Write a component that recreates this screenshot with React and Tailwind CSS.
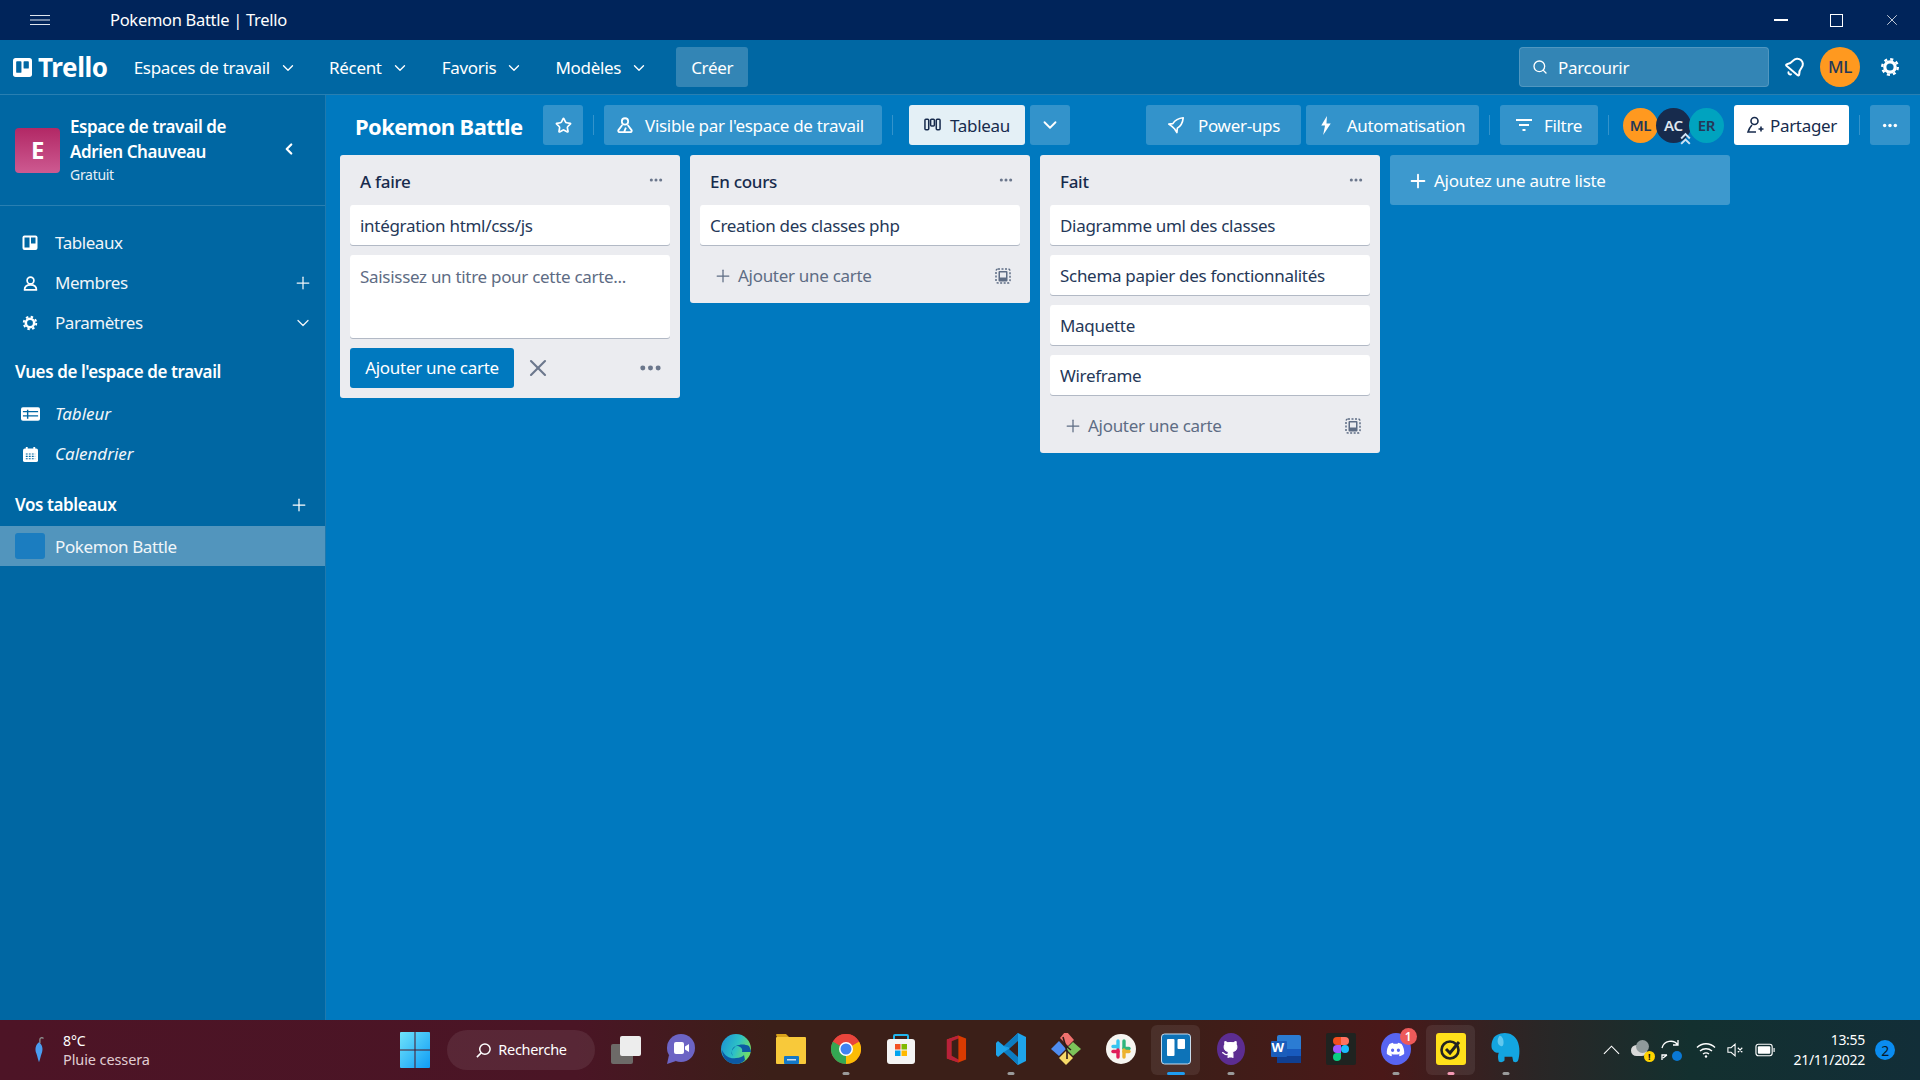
import React from "react";
import { Bell, ChevronDown, ChevronLeft, Plus, Search, Star, X } from "lucide-react";
import { FaDiscord } from "react-icons/fa";

const Dots = ({ className = "" }) => (
  <svg viewBox="0 0 24 6" className={className} fill="currentColor"><circle cx="4" cy="3" r="2.6" /><circle cx="12" cy="3" r="2.6" /><circle cx="20" cy="3" r="2.6" /></svg>
);
const Rocket = ({ className = "" }) => (
  <svg viewBox="0 0 20 20" className={className} fill="none" stroke="currentColor" strokeWidth="1.8" strokeLinejoin="round"><path d="M18 2C13 2.500 9 4.500 6.500 8.500L2 9l3.500 2.500 3 3L11 18.500l.5-5C15.500 11 17.500 7 18 2z" /></svg>
);
const Gear = ({ className = "" }) => (
  <svg viewBox="0 0 20 20" className={className} fill="none" stroke="currentColor"><circle cx="10" cy="10" r="5.200" strokeWidth="3.200" /><circle cx="10" cy="10" r="7.800" strokeWidth="2.400" strokeDasharray="3.060 3.060" /></svg>
);
const Person = ({ className = "" }) => (
  <svg viewBox="0 0 20 20" className={className} fill="none" stroke="currentColor" strokeWidth="2"><circle cx="10" cy="6.5" r="4" /><path d="M3 17.5c0-4 3-6 7-6s7 2 7 6z" strokeLinejoin="round" /></svg>
);
const BoardIcon = ({ className = "" }) => (
  <svg viewBox="0 0 16 16" className={className}><rect x="0.5" y="0.5" width="15" height="14.5" rx="2" fill="#fff" /><rect x="2.500" y="2.500" width="5" height="10" fill="#0067a3" /><rect x="9" y="2.500" width="4.500" height="6" fill="#0067a3" /></svg>
);
const TemplateIcon = () => (
  <svg viewBox="0 0 16 16" className="w-[16px] h-[16px] text-[#5e6c84]"><rect x="1" y="1" width="14" height="14" rx="2" fill="none" stroke="currentColor" strokeWidth="1.5" strokeDasharray="2 1.5" /><rect x="3.5" y="3" width="9" height="10.5" rx="1" fill="currentColor" /><rect x="5" y="4.5" width="6" height="5" fill="#ebecf0" /></svg>
);

const NavItem = ({ label, className = "" }) => (
  <div className={`flex items-center ${className}`}>
    <span>{label}</span>
    <ChevronDown className="w-[18px] h-[18px] ml-[9px]" strokeWidth={1.8} />
  </div>
);

const HBtn = ({ w, children, className = "" }) => (
  <div style={{ width: w }} className={`h-[40px] rounded-[3px] bg-[#ffffff33] flex items-center justify-center shrink-0 text-white text-[17px] ${className}`}>{children}</div>
);
const Sep = ({ className = "mx-[10px]" }) => <div className={`w-px h-[20px] bg-[#ffffff33] shrink-0 ${className}`} />;

const SideRow = ({ icon, label, right, italic }) => (
  <div className={`h-[40px] flex items-center pl-[20px] pr-[12px] text-[17px] text-[#f0f5f9] ${italic ? "italic tracking-[0px]" : "tracking-[-0.45px]"}`}>
    <span className="w-[20px] h-[20px] flex items-center justify-center text-white">{icon}</span>
    <span className="ml-[15px] flex-1">{label}</span>
    {right}
  </div>
);

const Card = ({ children }) => (
  <div className="h-[40px] rounded-[3px] bg-white shadow-[0_1px_0_#091e4240] px-[10px] pt-[2px] flex items-center text-[17px] text-[#253858] mb-[10px]">{children}</div>
);
const ListHead = ({ title }) => (
  <div className="h-[50px] pl-[20px] pr-[17px] flex items-center justify-between text-[17px] font-medium text-[#172b4d] pt-[4px]">
    <span>{title}</span>
    <Dots className="w-[14px] h-[4px] text-[#6b778c] -mt-[5px]" />
  </div>
);
const AddRow = () => (
  <div className="h-[40px] mx-[10px] mb-[8px] flex items-center text-[17px] text-[#5e6c84] pl-[13px] pr-[9px] pt-[2px]">
    <Plus className="w-[20px] h-[20px] mr-[5px]" strokeWidth={1.5} />
    <span className="flex-1">Ajouter une carte</span>
    <TemplateIcon />
  </div>
);
const Avatar = ({ bg, text, label, className = "", children }) => (
  <div className={`w-[35px] h-[35px] rounded-full relative flex items-center justify-center text-[15px] font-semibold shrink-0 ${bg} ${text} ${className}`}>{label}{children}</div>
);

/* taskbar icons */
const I = ({ children, active, dot, w = 55 }) => (
  <div style={{ width: w }} className="h-[50px] relative flex items-center justify-center shrink-0">
    {active && <div className="absolute inset-x-[3px] inset-y-0 rounded-[6px] bg-[#ffffff14]" />}
    <div className="relative w-[30px] h-[30px] flex items-center justify-center -mt-[2px]">{children}</div>
    {dot && <div className={`absolute bottom-[0px] left-1/2 -translate-x-1/2 h-[3px] rounded-full ${dot}`} />}
  </div>
);

const Taskbar = () => (
  <div className="h-[60px] shrink-0 flex items-center bg-[linear-gradient(90deg,#4d1426_0%,#4a1525_30%,#3b1f18_40%,#3b1f18_60%,#4a1818_72%,#2a2626_80%,#13302f_88%,#122e38_100%)] text-white">
    <div className="w-[400px] shrink-0 flex items-center pl-[32px]">
      <svg viewBox="0 0 16 32" className="w-[14px] h-[30px]"><path d="M9 8V4c0-2 3-3 4-1" stroke="#888" strokeWidth="1.6" fill="none" /><path d="M8 7c4 3 5 8 3 13-1 3-2 7-3 10-1-3-2-7-3-10C3 15 4 10 8 7z" fill="#4a9df0" /></svg>
      <div className="ml-[17px] leading-[18px] tracking-[-0.1px]">
        <div className="text-[14px]">8°C</div>
        <div className="text-[14.5px] text-[#e0cdd2]">Pluie cessera</div>
      </div>
    </div>
    <svg viewBox="0 0 30 36" className="w-[30px] h-[36px] shrink-0">
      <defs><linearGradient id="win" x1="0" y1="0" x2="1" y2="1"><stop offset="0" stopColor="#6fe3fb" /><stop offset="1" stopColor="#0f9cf5" /></linearGradient></defs>
      <path d="M1 0h13.5v17.5H0V1a1 1 0 0 1 1-1zM15.5 0H29a1 1 0 0 1 1 1v16.5H15.5zM0 18.5h14.5V36H1a1 1 0 0 1-1-1zM15.5 18.5H30V35a1 1 0 0 1-1 1H15.5z" fill="url(#win)" />
    </svg>
    <div className="ml-[17px] w-[148px] h-[40px] rounded-full bg-[#ffffff14] flex items-center justify-center text-[14.5px] shrink-0">
      <svg viewBox="0 0 18 18" className="w-[17px] h-[17px] mr-[6px]" fill="none" stroke="#fff" strokeWidth="1.6"><circle cx="10.5" cy="7.5" r="5.5" /><path d="M6.5 11.5 2 16" /></svg>
      Recherche
    </div>
    <div className="ml-[16px] w-[30px] h-[30px] relative shrink-0">
      <div className="absolute left-0 top-[9px] w-[22px] h-[20px] rounded-[2px] bg-[#6d6a68]" />
      <div className="absolute right-0 top-[1px] w-[21px] h-[20px] rounded-[2px] bg-[#ededed]" />
    </div>
    <div className="flex items-center ml-[12px]">
      <I><svg viewBox="0 0 30 32" className="w-[30px] h-[32px]"><circle cx="15" cy="15" r="14" fill="#6c64c4" /><path d="M3 22 1 31l9-3z" fill="#6c64c4" /><rect x="8" y="9" width="10" height="12" rx="2" fill="#fff" /><path d="M19 13.5 23 11v8l-4-2.5z" fill="#fff" /></svg></I>
      <I><svg viewBox="0 0 30 30" className="w-[30px] h-[30px]"><defs><linearGradient id="edge" x1="0" y1="0" x2="1" y2="0.4"><stop offset="0" stopColor="#1b8fd6" /><stop offset="0.6" stopColor="#2dc1c6" /><stop offset="1" stopColor="#6fdc6a" /></linearGradient></defs><circle cx="15" cy="15" r="15" fill="url(#edge)" /><path d="M15 30C7 30 1 24 1 16c3 7 9 9 14 8 4 0 7-2 8-3l1 5c-2 2-5 4-9 4z" fill="#0c59a4" /><path d="M12 22c-3-5 0-11 5-10 3 1 5 3 4 6h9c0-2-1-4-2-6-4-2-9-2-13 0-4 3-6 7-3 10z" fill="#0c59a4" /></svg></I>
      <I><svg viewBox="0 0 30 32" className="w-[30px] h-[32px]"><path d="M0 2a1 1 0 0 1 1-1h9l3 3H1z" fill="#d9a21b" /><rect x="0" y="4" width="30" height="27" rx="1" fill="#f8c93a" /><rect x="8" y="23" width="15" height="8" rx="1" fill="#1478c8" /><rect x="11" y="26" width="9" height="1.5" fill="#cde" /></svg></I>
      <I dot="w-[7px] bg-[#9a9a9a]"><svg viewBox="0 0 30 30" className="w-[30px] h-[30px]"><circle cx="15" cy="15" r="15" fill="#e8453c" /><path d="M15 15 2 7.5A15 15 0 0 0 15 30z" fill="#34a853" /><path d="M15 15 15 30A15 15 0 0 0 28 7.5z" fill="#fbbc05" /><path d="M15 15 28 7.5A15 15 0 0 0 2 7.5z" fill="#e8453c" /><circle cx="15" cy="15" r="7" fill="#fff" /><circle cx="15" cy="15" r="5.5" fill="#3f83f1" /></svg></I>
      <I><svg viewBox="0 0 30 32" className="w-[30px] h-[32px]"><path d="M8 7V3a1 1 0 0 1 1-1h12a1 1 0 0 1 1 1v4" fill="none" stroke="#22b6ee" strokeWidth="2" /><rect x="1" y="6" width="28" height="25" rx="3" fill="#f4f4f4" /><rect x="9" y="11" width="5.5" height="5.5" fill="#f25022" /><rect x="15.5" y="11" width="5.5" height="5.5" fill="#7fba00" /><rect x="9" y="17.5" width="5.5" height="5.5" fill="#00a4ef" /><rect x="15.5" y="17.5" width="5.5" height="5.5" fill="#ffb900" /></svg></I>
      <I><svg viewBox="0 0 24 30" className="w-[23px] h-[30px]"><path d="M3 5 15 1l8 3v22l-8 3-12-4z" fill="#d83b01" /><path d="M3 5 15 1v3L8 7v15l7 4v3L3 25z" fill="#b7213a" /><path d="M8 7l7-3v22l-7-4z" fill="#3b1f18" /></svg></I>
      <I dot="w-[7px] bg-[#9a9a9a]"><svg viewBox="0 0 30 32" className="w-[30px] h-[32px]"><path d="M22 0 30 4v24l-8 4-14-13-6 5-2-2V10l2-2 6 5z" fill="#1ea4ea" /><path d="M22 0v32L8 19l6-4-6-2z" fill="#0d7cc1" /><path d="m22 8-9 8 9 8z" fill="#3b1f18" /><path d="M2 8 22 24v-0L8 13 2 8z" fill="#0a6cab" /></svg></I>
      <I><svg viewBox="0 0 30 32" className="w-[30px] h-[32px]"><path d="M15 0h-2L8 6l8 8 6-6z" fill="#f0716e" transform="translate(1 -1)" /><path d="M8 8 0 16l8 7 7-7z" fill="#4f8df0" /><path d="M22 9l-7 7 7 7 8-7z" fill="#7cc35a" /><path d="M15 18l-7 7 7 7 7-7z" fill="#f6da68" /><path d="M12 4l4 14v8M15 13l5 4" stroke="#2d1b17" strokeWidth="1.6" fill="none" /></svg></I>
      <I><svg viewBox="0 0 30 30" className="w-[30px] h-[30px]"><circle cx="15" cy="15" r="15" fill="#f7f5f1" /><g strokeWidth="3.4" strokeLinecap="round"><path d="M12 7v7M7 12.5h5" stroke="#36c5f0" /><path d="M18 7v7" stroke="#2eb67d" /><path d="M18 14.5h5" stroke="#2eb67d" /><path d="M18 23v-7" stroke="#ecb22e" /><path d="M23 17.500h-5" stroke="#ecb22e" /><path d="M12 23v-7" stroke="#e01e5a" /><path d="M7 17.500h5" stroke="#e01e5a" /></g></svg></I>
      <I active dot="w-[18px] bg-[#1f9cf0]"><svg viewBox="0 0 30 32" className="w-[30px] h-[32px]"><rect x="0.500" y="1" width="29" height="30" rx="3" fill="#0d73b8" stroke="#c9dcec" strokeWidth="1" /><rect x="6" y="6" width="7.500" height="17" rx="1" fill="#fff" /><rect x="16.500" y="6" width="7.500" height="10" rx="1" fill="#fff" /></svg></I>
      <I dot="w-[7px] bg-[#9a9a9a]"><div className="w-[28px] h-[32px] rounded-[50%] bg-[#5c2d91] flex items-center justify-center"><svg viewBox="0 0 24 24" className="w-[19px] h-[19px]" fill="#fff" stroke="#fff" strokeWidth="1.500" strokeLinecap="round" strokeLinejoin="round"><path d="M15 22v-4a4.800 4.800 0 0 0-1-3.500c3 0 6-2 6-5.500.08-1.250-.27-2.480-1-3.500.28-1.150.28-2.350 0-3.500 0 0-1 0-3 1.500-2.640-.5-5.360-.5-8 0C6 2 5 2 5 2c-.3 1.150-.3 2.350 0 3.500A5.403 5.403 0 0 0 4 9c0 3.500 3 5.500 6 5.500-.39.490-.68 1.050-.85 1.650-.17.600-.22 1.230-.15 1.850v4" /><path d="M9 18c-4.510 2-5-2-7-2" fill="none" /></svg></div></I>
      <I><svg viewBox="0 0 30 30" className="w-[30px] h-[30px]"><rect x="6" y="1" width="24" height="28" rx="2" fill="#2b7cd3" /><rect x="6" y="15" width="24" height="7" fill="#185abd" /><rect x="6" y="22" width="24" height="7" fill="#103f91" /><rect x="0" y="7" width="16" height="16" rx="1" fill="#1a5dbb" /></svg><span className="absolute left-[1px] top-[5px] text-[13px] font-bold text-white leading-[16px]">W</span></I>
      <I><svg viewBox="0 0 30 32" className="w-[30px] h-[32px]"><rect width="30" height="32" rx="2" fill="#1f2320" /><circle cx="19" cy="16" r="4" fill="#1abcfe" /><path d="M11 4h4v8h-4a4 4 0 0 1 0-8z" fill="#f24e1e" /><path d="M15 4h4a4 4 0 0 1 0 8h-4z" fill="#ff7262" /><path d="M11 12h4v8h-4a4 4 0 0 1 0-8z" fill="#a259ff" /><path d="M11 20h4v4a4 4 0 1 1-4-4z" fill="#0acf83" /></svg></I>
      <I dot="w-[7px] bg-[#9a9a9a]"><div className="w-[30px] h-[32px] rounded-[50%] bg-[#5865f2] flex items-center justify-center"><FaDiscord className="text-white w-[19px] h-[19px]" /></div><div className="absolute -right-[6px] -top-[6px] w-[17px] h-[17px] rounded-full bg-[#ed5a5a] text-[12px] font-semibold flex items-center justify-center">1</div></I>
      <I active dot="w-[7px] bg-[#f59ab5]"><svg viewBox="0 0 30 32" className="w-[30px] h-[32px]"><rect width="30" height="32" rx="3" fill="#ffe01a" /><circle cx="14" cy="17" r="8.500" fill="none" stroke="#222" strokeWidth="2.600" /><path d="m10 16 4 4 9-11" fill="none" stroke="#222" strokeWidth="3" /></svg></I>
      <I dot="w-[7px] bg-[#9a9a9a]"><svg viewBox="0 0 30 34" className="w-[29px] h-[34px]"><path d="M10 1c7-2 14 1 17 7 3 6 3 14 1 21-1 2-3 2-5 1l-1-5-8 0v4c-2 2-4 2-6 1-1-4-1-6 0-9-3 0-5-1-6-3-2-1-2-7 0-11 1-3 4-5 8-6z" fill="#13a5e0" /><path d="M9 3c-3 4-3 9 1 11 2 1 3-1 3-4s-1-6-4-7z" fill="#61c8ee" /></svg></I>
    </div>
    <div className="flex-1" />
    <div className="flex items-center shrink-0">
      <svg viewBox="0 0 18 10" className="w-[17px] h-[10px]" fill="none" stroke="#fff" strokeWidth="1.200"><path d="m1 9 8-8 8 8" /></svg>
      <div className="ml-[11px] w-[24px] h-[24px] relative">
        <div className="absolute left-0 top-[7px] w-[16px] h-[11px] rounded-full bg-[#d9d9d9]" />
        <div className="absolute left-[5px] top-[2px] w-[13px] h-[13px] rounded-full bg-[#8f9a9b]" />
        <div className="absolute right-[0px] bottom-[0px] w-[11px] h-[11px] rounded-full bg-[#ffd400] text-[#111] text-[9px] font-bold flex items-center justify-center leading-none">!</div>
      </div>
      <div className="ml-[4px] w-[24px] h-[24px] relative">
        <svg viewBox="0 0 24 24" className="w-[24px] h-[24px]" fill="none" stroke="#fff" strokeWidth="1.300"><path d="M3 10a9 9 0 0 1 16-3M19 2v5h-5M3 22v-5h5M8 17l-4 3" /></svg>
        <div className="absolute right-[1px] bottom-[1px] w-[10px] h-[10px] rounded-full bg-[#0a78d4]" />
      </div>
      <svg viewBox="0 0 20 16" className="ml-[13px] w-[20px] h-[16px]" fill="none" stroke="#fff" strokeWidth="1.400"><path d="M1 5.500c5-5 13-5 18 0M4 9c3.500-3 8.500-3 12 0M7 12c2-1.500 4-1.500 6 0" /><circle cx="10" cy="14.500" r="1.200" fill="#fff" stroke="none" /></svg>
      <svg viewBox="0 0 20 16" className="ml-[11px] w-[18px] h-[16px]" fill="none" stroke="#fff" strokeWidth="1.200"><path d="M1 5.500h3.500L9 1.500v13l-4.500-4H1zM12 5.500l5 5M17 5.500l-5 5" /></svg>
      <svg viewBox="0 0 22 14" className="ml-[10px] w-[21px] h-[14px]" fill="none" stroke="#fff" strokeWidth="1.200"><rect x="1" y="1" width="17" height="12" rx="2.500" /><rect x="3" y="3" width="13" height="8" rx="1" fill="#fff" stroke="none" /><path d="M20 5v4" /></svg>
      <div className="ml-[18px] text-right text-[14px] leading-[20px]">
        <div>13:55</div>
        <div>21/11/2022</div>
      </div>
      <div className="ml-[10px] mr-[25px] w-[20px] h-[20px] rounded-full bg-[#0a8cf0] text-[#08192a] text-[14px] flex items-center justify-center">2</div>
    </div>
  </div>
);

export default function App() {
  return (
    <div className="w-[1920px] h-[1080px] flex flex-col overflow-hidden font-['Noto_Sans',sans-serif] tracking-[-0.3px] bg-[#0079bf]">
      {/* title bar */}
      <div className="h-[40px] shrink-0 bg-[#00245a] flex items-center text-white">
        <svg viewBox="0 0 20 10" className="ml-[30px] w-[20px] h-[10px]" stroke="#dfe6ee" strokeWidth="1"><path d="M0 .5h20M0 5h20M0 9.500h20" /></svg>
        <span className="ml-[60px] text-[16.5px] flex-1 pt-[1px]">Pokemon Battle | Trello</span>
        <div className="w-[14px] h-[2px] bg-white" />
        <div className="ml-[42px] w-[13px] h-[13px] border border-white" />
        <X className="ml-[40px] mr-[19px] w-[18px] h-[18px]" strokeWidth={1} />
      </div>
      {/* header */}
      <div className="h-[55px] shrink-0 bg-[#0067a3] border-b border-[#ffffff29] flex items-center text-white text-[17px]">
        <svg viewBox="0 0 18 18" className="ml-[13px] w-[19px] h-[19px]"><rect width="18" height="18" rx="2.500" fill="#fff" /><rect x="3" y="3" width="5" height="11" rx="0.800" fill="#0067a3" /><rect x="10" y="3" width="5" height="7" rx="0.800" fill="#0067a3" /></svg>
        <span className="ml-[6px] text-[26px] font-bold leading-none tracking-[-0.4px]">Trello</span>
        <div className="ml-[26px] flex items-center pt-[2px]">
          <NavItem label="Espaces de travail" />
          <NavItem label="Récent" className="ml-[32px]" />
          <NavItem label="Favoris" className="ml-[33px]" />
          <NavItem label="Modèles" className="ml-[32px]" />
        </div>
        <div className="ml-[28px] w-[72px] h-[40px] rounded-[3px] bg-[#ffffff33] flex items-center justify-center pt-[2px]">Créer</div>
        <div className="flex-1" />
        <div className="w-[250px] h-[40px] rounded-[4px] bg-[#ffffff33] border border-[#ffffff26] flex items-center pl-[12px]">
          <Search className="w-[16px] h-[16px] mr-[10px]" strokeWidth={2} />
          <span className="pt-[2px]">Parcourir</span>
        </div>
        <Bell className="ml-[15px] w-[22px] h-[22px] rotate-[40deg]" strokeWidth={2.2} />
        <div className="ml-[14px] w-[40px] h-[40px] rounded-full bg-[#ff991f] text-[#253858] text-[17px] font-medium flex items-center justify-center">ML</div>
        <Gear className="ml-[20px] mr-[20px] w-[20px] h-[20px]" />
      </div>
      <div className="flex-1 flex min-h-0">
        {/* sidebar */}
        <div className="w-[326px] shrink-0 bg-[#0067a3] border-r border-[#ffffff1f] text-white">
          <div className="h-[111px] border-b border-[#ffffff29] flex items-center pl-[15px] relative">
            <div className="w-[45px] h-[45px] rounded-[4px] bg-[linear-gradient(180deg,#b22865,#cd5a91)] flex items-center justify-center text-[24px] font-bold">E</div>
            <div className="ml-[10px] w-[200px]">
              <div className="text-[17px] font-semibold leading-[25px] tracking-[-0.4px]">Espace de travail de Adrien Chauveau</div>
              <div className="text-[14px] leading-[22px] text-[#e6eff5]">Gratuit</div>
            </div>
            <ChevronLeft className="ml-[10px] w-[18px] h-[18px] -mt-[2px]" strokeWidth={3} />
          </div>
          <div className="pt-[17px]">
            <SideRow icon={<BoardIcon className="w-[16px] h-[16px]" />} label="Tableaux" />
            <SideRow icon={<Person className="w-[17px] h-[17px]" />} label="Membres" right={<Plus className="w-[20px] h-[20px]" strokeWidth={1.5} />} />
            <SideRow icon={<Gear className="w-[16px] h-[16px]" />} label="Paramètres" right={<ChevronDown className="w-[20px] h-[20px]" strokeWidth={1.5} />} />
          </div>
          <div className="mt-[9px] mb-[2px] h-[40px] flex items-center pl-[15px] text-[17px] font-semibold tracking-[-0.4px]">Vues de l'espace de travail</div>
          <SideRow italic icon={<svg viewBox="0 0 20 14" className="w-[19px] h-[14px]"><rect width="20" height="14" rx="2" fill="#fff" /><path d="M2 4.500h16M2 9h16M7 2.500V12" stroke="#0067a3" strokeWidth="1.500" /></svg>} label="Tableur" />
          <SideRow italic icon={<svg viewBox="0 0 16 16" className="w-[15px] h-[15px]"><rect y="1.500" width="16" height="14.500" rx="2" fill="#fff" /><rect x="3" y="0" width="2" height="3" fill="#fff" /><rect x="11" y="0" width="2" height="3" fill="#fff" /><path d="M3 7.500h10M3 10h10M3 12.500h10" stroke="#0067a3" strokeWidth="1.200" strokeDasharray="2 1.200" /></svg>} label="Calendrier" />
          <div className="mt-[11px] mb-[1px] h-[40px] flex items-center justify-between pl-[15px] pr-[16px] text-[17px] font-semibold tracking-[-0.4px]">
            <span>Vos tableaux</span>
            <Plus className="w-[20px] h-[20px]" strokeWidth={1.5} />
          </div>
          <div className="h-[40px] bg-[#5295bd] flex items-center pl-[15px] text-[17px] text-[#f0f5f9] tracking-[-0.4px]">
            <div className="w-[30px] h-[26px] rounded-[3px] bg-[#1b7dc0]" />
            <span className="ml-[10px] pt-[2px]">Pokemon Battle</span>
          </div>
        </div>
        {/* board */}
        <div className="flex-1 min-w-0 bg-[#0079bf] flex flex-col">
          <div className="h-[60px] shrink-0 flex items-center pl-[29px] pr-[10px]">
            <div className="text-[22px] font-bold text-white w-[188px] tracking-[-0.6px] pt-[2px]">Pokemon Battle</div>
            <HBtn w={40}><Star className="w-[17px] h-[17px]" strokeWidth={2.4} /></HBtn>
            <Sep />
            <HBtn w={278}>
              <svg viewBox="0 0 20 20" className="w-[18px] h-[18px] mr-[11px] ml-[-6px]" fill="none" stroke="#fff" strokeWidth="2"><circle cx="10" cy="6" r="3.500" /><path d="M7 10 2.500 16c0 1.500 1 2 2 2h4M13 10l4.500 6c0 1.500-1 2-2 2H9l2-5" strokeLinejoin="round" /></svg>
              <span className="pt-[2px]">Visible par l'espace de travail</span>
            </HBtn>
            <Sep className="ml-[10px] mr-[16px]" />
            <div className="w-[116px] h-[40px] rounded-[3px] bg-[#e4f0f6] text-[#172b4d] text-[17px] flex items-center justify-center shrink-0">
              <svg viewBox="0 0 18 14" className="w-[17px] h-[14px] mr-[9px]" fill="none" stroke="#172b4d" strokeWidth="1.600"><rect x="1" y="1" width="4" height="11" rx="1" /><rect x="7" y="1" width="4" height="7" rx="1" /><rect x="13" y="1" width="4" height="11" rx="1" /></svg>
              <span className="pt-[2px]">Tableau</span>
            </div>
            <HBtn w={40} className="ml-[5px]"><ChevronDown className="w-[22px] h-[22px]" strokeWidth={2} /></HBtn>
            <div className="flex-1" />
            <HBtn w={155}><Rocket className="w-[18px] h-[18px] mr-[13px]" /><span className="pt-[2px]">Power-ups</span></HBtn>
            <HBtn w={173} className="ml-[5px]">
              <svg viewBox="0 0 12 20" className="w-[12px] h-[19px] mr-[15px]" fill="#fff"><path d="M7 0 1 10h4l-2 10 8-12H6.500z" /></svg>
              <span className="pt-[2px]">Automatisation</span>
            </HBtn>
            <Sep />
            <HBtn w={98}>
              <svg viewBox="0 0 16 14" className="w-[16px] h-[14px] mr-[12px]" stroke="#fff" strokeWidth="2"><path d="M0 2h16M3 7h10M6.500 12h3" /></svg>
              <span className="pt-[2px]">Filtre</span>
            </HBtn>
            <Sep />
            <div className="flex items-center ml-[4px] mr-[10px]">
              <Avatar bg="bg-[#ff991f]" text="text-[#253858]" label="ML" />
              <Avatar bg="bg-[#172b4d]" text="text-[#dfe6ee]" label="AC" className="-ml-[2px]">
                <svg viewBox="0 0 12 12" className="absolute -right-[1px] -bottom-[2px] w-[13px] h-[13px]" fill="none" stroke="#cfe3f5" strokeWidth="1.800"><path d="m2 6 4-4 4 4M2 11l4-4 4 4" /></svg>
              </Avatar>
              <Avatar bg="bg-[#00a3bf]" text="text-[#253858]" label="ER" className="-ml-[2px]" />
            </div>
            <div className="w-[115px] h-[40px] rounded-[3px] bg-white text-[#172b4d] text-[17px] flex items-center justify-center shrink-0">
              <svg viewBox="0 0 18 18" className="w-[18px] h-[18px] mr-[6px]" fill="none" stroke="#172b4d" strokeWidth="1.600"><circle cx="8.500" cy="5" r="3.500" /><path d="M6 9c-2 2-3 4-4 7h8M12.500 13h5M15 10.500v5" /></svg>
              <span className="pt-[2px]">Partager</span>
            </div>
            <Sep />
            <HBtn w={40}><Dots className="w-[16px] h-[5px]" /></HBtn>
          </div>
          <div className="flex items-start gap-[10px] pl-[14px]">
            <div className="w-[340px] rounded-[3px] bg-[#ebecf0] shrink-0">
              <ListHead title="A faire" />
              <div className="px-[10px]">
                <Card>intégration html/css/js</Card>
                <div className="h-[83px] rounded-[3px] bg-white shadow-[0_1px_0_#091e4240] px-[10px] pt-[9px] text-[17px] text-[#5e6c84]">Saisissez un titre pour cette carte...</div>
              </div>
              <div className="flex items-center px-[10px] pt-[10px] pb-[10px]">
                <div className="w-[164px] h-[40px] rounded-[3px] bg-[#0079bf] text-white text-[17px] flex items-center justify-center">Ajouter une carte</div>
                <X className="ml-[10px] w-[28px] h-[28px] text-[#6b778c]" strokeWidth={1.8} />
                <div className="flex-1" />
                <Dots className="w-[23px] h-[6px] text-[#6b778c] mr-[8px]" />
              </div>
            </div>
            <div className="w-[340px] rounded-[3px] bg-[#ebecf0] shrink-0">
              <ListHead title="En cours" />
              <div className="px-[10px]"><Card>Creation des classes php</Card></div>
              <AddRow />
            </div>
            <div className="w-[340px] rounded-[3px] bg-[#ebecf0] shrink-0">
              <ListHead title="Fait" />
              <div className="px-[10px]">
                <Card>Diagramme uml des classes</Card>
                <Card>Schema papier des fonctionnalités</Card>
                <Card>Maquette</Card>
                <Card>Wireframe</Card>
              </div>
              <AddRow />
            </div>
            <div className="w-[340px] h-[50px] rounded-[3px] bg-[#ffffff3d] text-white text-[17px] flex items-center pl-[17px] pt-[2px] shrink-0">
              <Plus className="w-[22px] h-[22px] mr-[5px]" strokeWidth={2} />
              Ajoutez une autre liste
            </div>
          </div>
        </div>
      </div>
      <Taskbar />
    </div>
  );
}
